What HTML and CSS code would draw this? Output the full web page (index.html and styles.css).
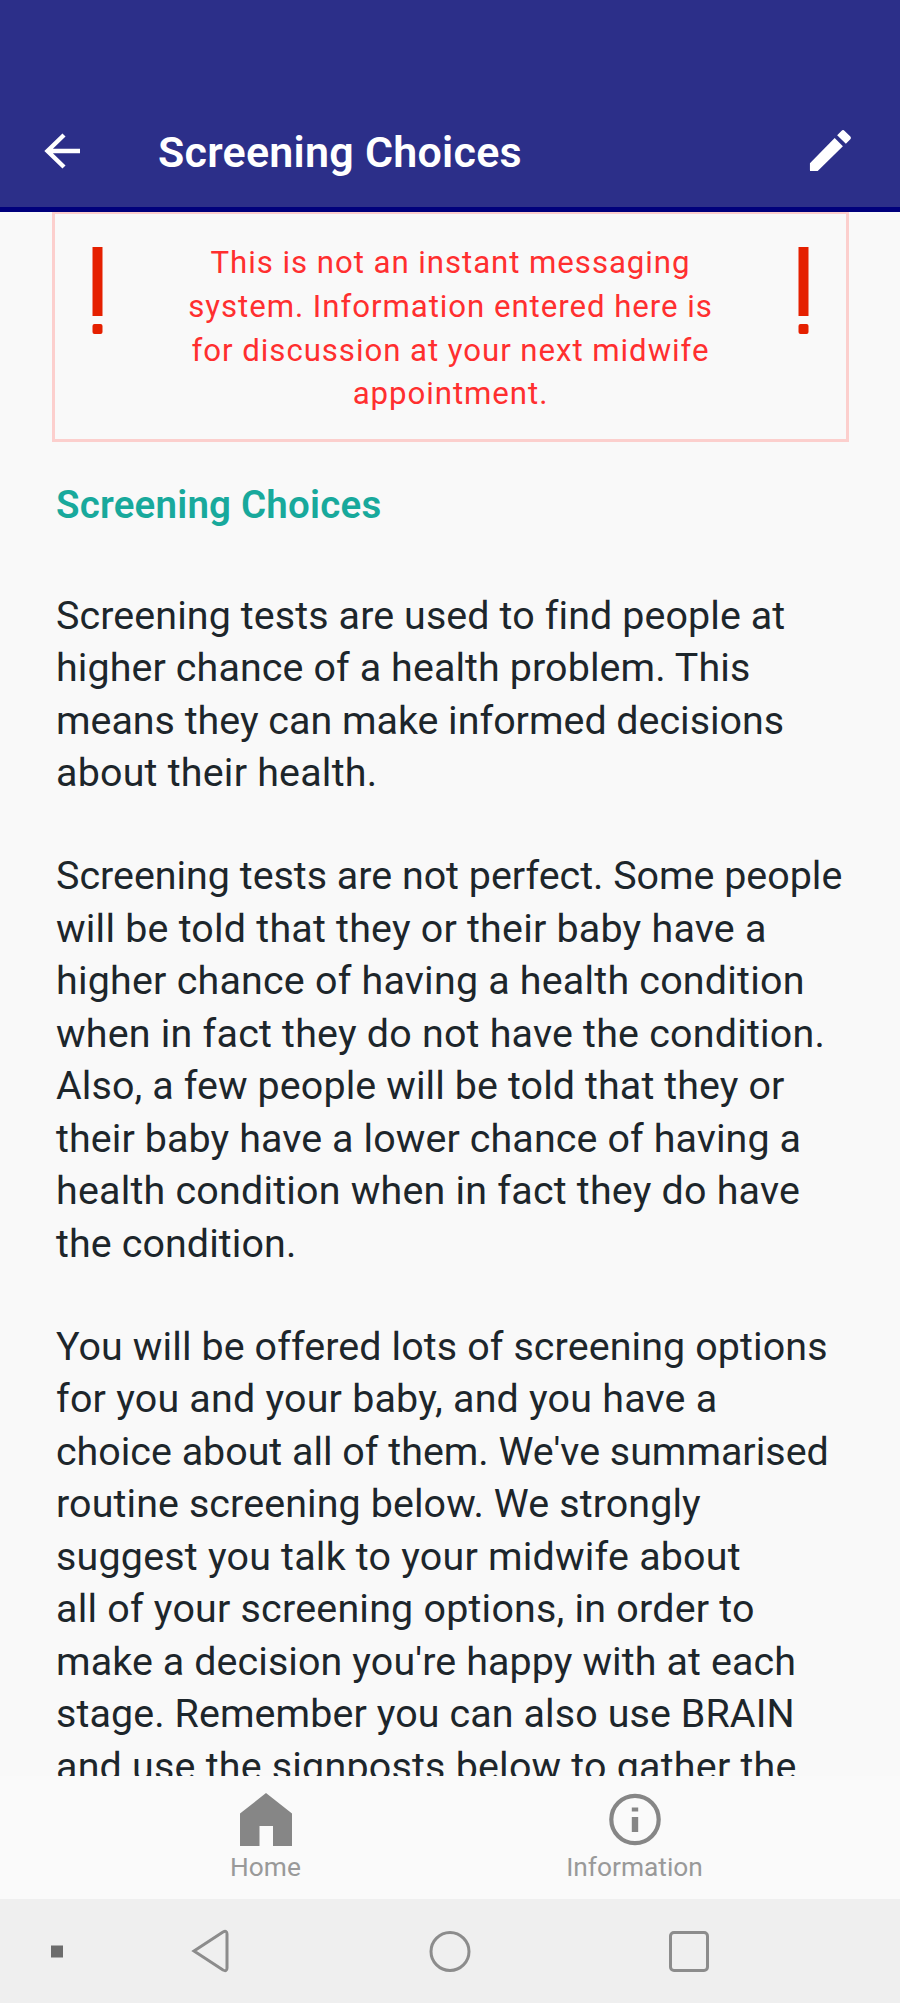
FILE: index.html
```html
<!DOCTYPE html>
<html lang="en">
<head>
<meta charset="utf-8">
<title>Screening Choices</title>
<link rel="stylesheet" href="styles.css">
</head>
<body>
<div class="screen">
  <header class="app-bar">
    <svg class="back" viewBox="0 0 38 38" aria-label="Back"><path d="M37 19H4M21 3 4.500 19l16.500 16"/></svg>
    <h1 class="app-title">Screening Choices</h1>
    <svg class="edit" viewBox="3 2.9 18.1 18.1" aria-label="Edit"><path d="M3.400 17.25V20.200q0 .4.4.4h2.950L17.61 9.94l-3.55-3.55L3.400 17.25zM20.71 7.04a1 1 0 0 0 0-1.41l-2.34-2.34a1 1 0 0 0-1.41 0l-1.83 1.83 3.75 3.75 1.83-1.83z"/></svg>
  </header>
  <main class="content">
    <section class="notice">
      <svg class="bang" viewBox="0 0 11 89"><path d="M.5 1h10v69h-10z"/><rect x=".5" y="78" width="10" height="10" rx="2"/></svg>
      <p class="notice-text">This is not an instant messaging<br>system. Information entered here is<br>for discussion at your next midwife<br>appointment.</p>
      <svg class="bang" viewBox="0 0 11 89"><path d="M.5 1h10v69h-10z"/><rect x=".5" y="78" width="10" height="10" rx="2"/></svg>
    </section>
    <article class="article">
      <h2 class="heading">Screening Choices</h2>
      <p class="para">
        <span class="line mid">Screening tests are used to find people at</span>
        <span class="line mid">higher chance of a health problem. This</span>
        <span class="line">means they can make informed decisions</span>
        <span class="line wide">about their health.</span>
      </p>
      <p class="para">
        <span class="line">Screening tests are not perfect. Some people</span>
        <span class="line wide">will be told that they or their baby have a</span>
        <span class="line wide">higher chance of having a health condition</span>
        <span class="line wide">when in fact they do not have the condition.</span>
        <span class="line mid">Also, a few people will be told that they or</span>
        <span class="line mid">their baby have a lower chance of having a</span>
        <span class="line wide">health condition when in fact they do have</span>
        <span class="line mid">the condition.</span>
      </p>
      <p class="para">
        <span class="line mid">You will be offered lots of screening options</span>
        <span class="line wide">for you and your baby, and you have a</span>
        <span class="line">choice about all of them. We've summarised</span>
        <span class="line mid">routine screening below. We strongly</span>
        <span class="line wide">suggest you talk to your midwife about</span>
        <span class="line wide">all of your screening options, in order to</span>
        <span class="line mid">make a decision you're happy with at each</span>
        <span class="line mid">stage. Remember you can also use BRAIN</span>
        <span class="line wide">and use the signposts below to gather the</span>
      </p>
    </article>
  </main>
  <nav class="tabs">
    <a class="tab"><svg class="tab-icon" viewBox="0 0 52 53"><path d="M26 0 52 20.500V53H33V33H19.500V53H0V20.500z"/></svg><span>Home</span></a>
    <a class="tab"><svg class="tab-icon" viewBox="0 0 52 53"><circle class="ring" cx="26" cy="26.500" r="23.700"/><path d="M22.800 14.500h6.400v4h-6.400zM22.800 24h6.400v15h-6.400z"/></svg><span>Information</span></a>
  </nav>
  <footer class="system-bar">
    <svg class="system-icons" viewBox="0 0 900 104"><rect class="dot" x="51" y="46.500" width="12" height="12"/><path d="M223 33 194 52l29 19q4 2 4-2V35q0-4-4-2z"/><circle cx="450" cy="52.500" r="19"/><rect x="670.500" y="33.500" width="37" height="38" rx="3.500"/></svg>
  </footer>
</div>
</body>
</html>
```
FILE: styles.css
```css
* { box-sizing: border-box; margin: 0; padding: 0; }
body { background: #fafafa; font-family: Roboto, sans-serif; font-variant-ligatures: none; }
.screen { display: flex; flex-direction: column; width: 900px; height: 2003px; overflow: hidden; }
.app-bar {
  flex: none; height: 212px; padding: 95px 49px 0 43px;
  display: flex; align-items: center;
  background: #2c2f89; border-bottom: 5px solid #00007c; color: #fff;
}
.back { width: 38px; height: 38px; fill: none; stroke: #fff; stroke-width: 4.4; }
.app-title { flex: 1; margin: 2px 0 0 77px; font-size: 43px; font-weight: 600; line-height: 52px; letter-spacing: 0.25px; white-space: nowrap; }
.edit { width: 42px; height: 42px; fill: #fff; }
.content { flex: none; height: 1564px; overflow: hidden; background: #f9f9f9; }
.notice {
  display: flex; justify-content: space-between; align-items: flex-start;
  height: 230px; margin: 0 51px 0 52px; padding: 32px 37px 0;
  border: 3px solid #fccfcd; border-top-width: 2px;
}
.bang { width: 11px; height: 89px; fill: #e52000; }
.notice-text { margin-top: -5px; font-size: 31.2px; letter-spacing: 0.95px; line-height: 43.75px; text-align: center; color: #ff2f2f; white-space: nowrap; }
.article { padding: 37px 40px 0 56px; color: #1d262b; white-space: nowrap; }
.heading { margin-bottom: 58px; font-size: 38.5px; font-weight: 600; line-height: 52.5px; letter-spacing: 0.2px; color: #18a99c; }
.para { font-size: 39.4px; line-height: 52.5px; margin-bottom: 50.5px; }
.line { display: block; }
.mid { letter-spacing: 0.11px; }
.wide { letter-spacing: 0.22px; }
.tabs { flex: none; height: 123px; padding: 17px 81px 0; display: grid; grid-template-columns: 1fr 1fr; }
.tab { display: flex; flex-direction: column; align-items: center; gap: 5px; font-size: 26.3px; line-height: 32px; color: #999; }
.tab-icon { width: 52px; height: 53px; fill: #868686; }
.ring { fill: none; stroke: #868686; stroke-width: 4.200; }
.system-bar { flex: none; height: 104px; background: #efefef; }
.system-icons { display: block; width: 900px; height: 104px; fill: none; stroke: #8c8c8c; stroke-width: 3; }
.dot { fill: #6c6c6c; stroke: none; }
```
